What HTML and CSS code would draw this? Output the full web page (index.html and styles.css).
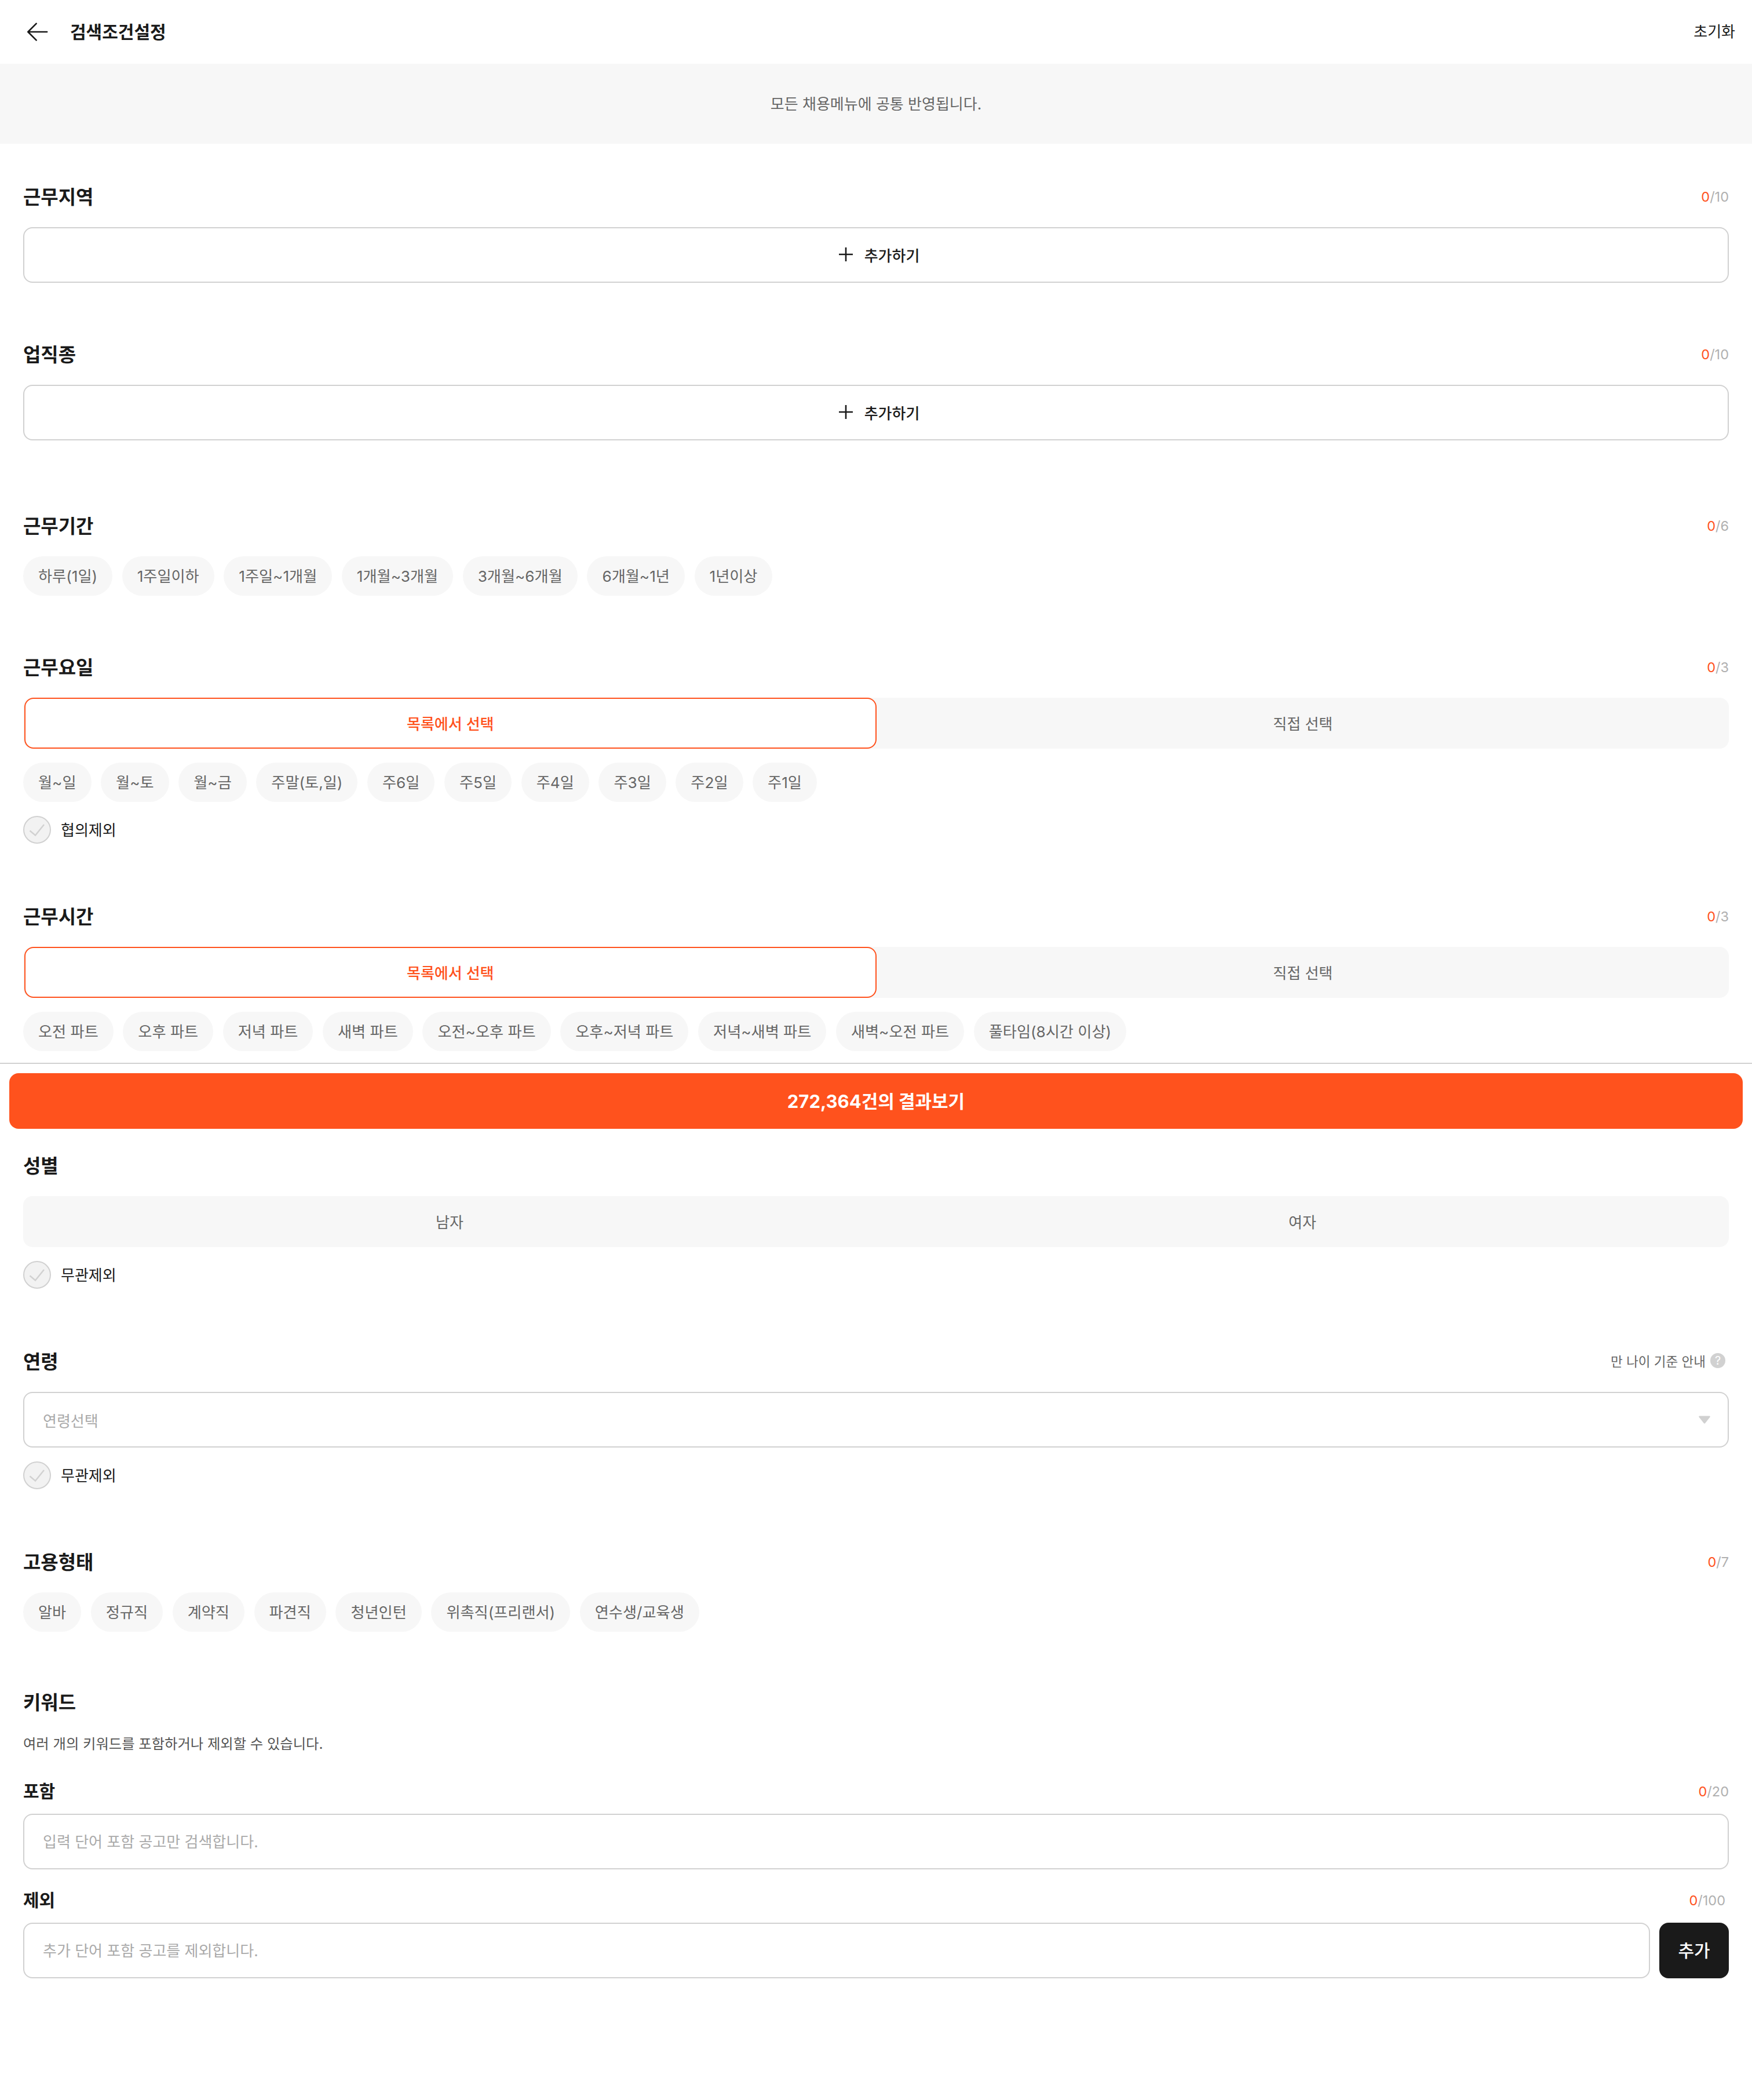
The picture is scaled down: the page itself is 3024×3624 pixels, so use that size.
FILE: index.html
```html
<!DOCTYPE html>
<html lang="ko">
<head>
  <meta charset="UTF-8" />
  <meta name="viewport" content="width=device-width, initial-scale=1" />
  <title>검색조건설정</title>
  <link rel="stylesheet" href="styles.css">
</head>
<body>

  <header class="topbar">
    <div class="topbar-left">
      <svg class="back-icon" viewBox="0 0 40 34" aria-hidden="true">
        <path d="M38 17H3M18 1.5L2.5 17L18 32.5" />
      </svg>
      <h1>검색조건설정</h1>
    </div>
    <button class="reset-btn">초기화</button>
  </header>

  <p class="notice">모든 채용메뉴에 공통 반영됩니다.</p>

  <main>
    <section class="section section-first">
      <div class="section-head">
        <h2>근무지역</h2>
        <span class="counter"><em>0</em>/10</span>
      </div>
      <button class="add-box">
        <svg class="plus-icon" viewBox="0 0 28 28" aria-hidden="true"><path d="M14 2V26M2 14H26" /></svg>
        추가하기
      </button>
    </section>

    <section class="section section-job">
      <div class="section-head">
        <h2>업직종</h2>
        <span class="counter"><em>0</em>/10</span>
      </div>
      <button class="add-box">
        <svg class="plus-icon" viewBox="0 0 28 28" aria-hidden="true"><path d="M14 2V26M2 14H26" /></svg>
        추가하기
      </button>
    </section>

    <section class="section section-wide">
      <div class="section-head">
        <h2>근무기간</h2>
        <span class="counter"><em>0</em>/6</span>
      </div>
      <div class="chips">
        <button class="chip">하루(1일)</button>
        <button class="chip">1주일이하</button>
        <button class="chip">1주일~1개월</button>
        <button class="chip">1개월~3개월</button>
        <button class="chip">3개월~6개월</button>
        <button class="chip">6개월~1년</button>
        <button class="chip">1년이상</button>
      </div>
    </section>

    <section class="section section-tight">
      <div class="section-head">
        <h2>근무요일</h2>
        <span class="counter"><em>0</em>/3</span>
      </div>
      <div class="segment">
        <button class="segment-item active">목록에서 선택</button>
        <button class="segment-item">직접 선택</button>
      </div>
      <div class="chips chips-below">
        <button class="chip">월~일</button>
        <button class="chip">월~토</button>
        <button class="chip">월~금</button>
        <button class="chip">주말(토,일)</button>
        <button class="chip">주6일</button>
        <button class="chip">주5일</button>
        <button class="chip">주4일</button>
        <button class="chip">주3일</button>
        <button class="chip">주2일</button>
        <button class="chip">주1일</button>
      </div>
      <label class="check">
        <span class="check-mark"><svg viewBox="2 2 44 44" aria-hidden="true"><path d="M11.5 25.5L21 33.5L36 15" /></svg></span>
        <span class="check-label">협의제외</span>
      </label>
    </section>

    <section class="section">
      <div class="section-head">
        <h2>근무시간</h2>
        <span class="counter"><em>0</em>/3</span>
      </div>
      <div class="segment">
        <button class="segment-item active">목록에서 선택</button>
        <button class="segment-item">직접 선택</button>
      </div>
      <div class="chips chips-below">
        <button class="chip">오전 파트</button>
        <button class="chip">오후 파트</button>
        <button class="chip">저녁 파트</button>
        <button class="chip">새벽 파트</button>
        <button class="chip">오전~오후 파트</button>
        <button class="chip">오후~저녁 파트</button>
        <button class="chip">저녁~새벽 파트</button>
        <button class="chip">새벽~오전 파트</button>
        <button class="chip">풀타임(8시간 이상)</button>
      </div>
    </section>

    <div class="result-bar">
      <button class="result-btn">272,364건의 결과보기</button>
    </div>

    <section class="section section-after-bar">
      <div class="section-head">
        <h2>성별</h2>
      </div>
      <div class="segment">
        <button class="segment-item">남자</button>
        <button class="segment-item">여자</button>
      </div>
      <label class="check">
        <span class="check-mark"><svg viewBox="2 2 44 44" aria-hidden="true"><path d="M11.5 25.5L21 33.5L36 15" /></svg></span>
        <span class="check-label">무관제외</span>
      </label>
    </section>

    <section class="section">
      <div class="section-head">
        <h2>연령</h2>
        <span class="age-help">만 나이 기준 안내 <i class="help-icon">?</i></span>
      </div>
      <div class="select-box">
        <span>연령선택</span>
        <svg class="select-arrow" viewBox="0 0 20 14" aria-hidden="true"><path d="M1.5 0.5H18.5C19.6 0.5 20.2 1.7 19.5 2.6L11.2 13C10.6 13.8 9.4 13.8 8.8 13L0.5 2.6C-0.2 1.7 0.4 0.5 1.5 0.5Z" /></svg>
      </div>
      <label class="check">
        <span class="check-mark"><svg viewBox="2 2 44 44" aria-hidden="true"><path d="M11.5 25.5L21 33.5L36 15" /></svg></span>
        <span class="check-label">무관제외</span>
      </label>
    </section>

    <section class="section">
      <div class="section-head">
        <h2>고용형태</h2>
        <span class="counter"><em>0</em>/7</span>
      </div>
      <div class="chips">
        <button class="chip">알바</button>
        <button class="chip">정규직</button>
        <button class="chip">계약직</button>
        <button class="chip">파견직</button>
        <button class="chip">청년인턴</button>
        <button class="chip">위촉직(프리랜서)</button>
        <button class="chip">연수생/교육생</button>
      </div>
    </section>

    <section class="section section-keyword">
      <div class="section-head section-head-tight">
        <h2>키워드</h2>
      </div>
      <p class="keyword-desc">여러 개의 키워드를 포함하거나 제외할 수 있습니다.</p>

      <div class="keyword-head">
        <h3>포함</h3>
        <span class="counter"><em>0</em>/20</span>
      </div>
      <input class="text-input" type="text" placeholder="입력 단어 포함 공고만 검색합니다." />

      <div class="keyword-head keyword-head-exclude">
        <h3>제외</h3>
        <span class="counter counter-inset"><em>0</em>/100</span>
      </div>
      <div class="input-row">
        <input class="text-input" type="text" placeholder="추가 단어 포함 공고를 제외합니다." />
        <button class="add-btn">추가</button>
      </div>
    </section>
  </main>

</body>
</html>
```

FILE: styles.css
```css
/* Base */
body {
  margin: 0;
  background: #fff;
  color: #1a1a1a;
  font-family: Inter, "Noto Sans CJK KR", sans-serif;
  font-size: 26px;
}
button, input {
  font-family: inherit;
  font-size: inherit;
}
button {
  cursor: pointer;
}
h1, h2, h3, p {
  margin: 0;
}

/* Top bar */
.topbar {
  height: 110px;
  display: flex;
  justify-content: space-between;
  align-items: center;
  padding: 0 29px 0 46px;
  box-sizing: border-box;
}
.topbar-left {
  display: flex;
  align-items: center;
  gap: 38px;
}
.back-icon {
  width: 37px;
  height: 32px;
  fill: none;
  stroke: #1a1a1a;
  stroke-width: 2.8;
  stroke-linecap: round;
  stroke-linejoin: round;
}
.topbar h1 {
  font-size: 30px;
  font-weight: 700;
  padding-bottom: 4px;
}
.reset-btn {
  border: none;
  background: none;
  padding: 0;
  color: #1a1a1a;
  margin-bottom: 6px;
}

.notice {
  height: 138px;
  line-height: 140px;
  background: #f7f7f7;
  color: #666;
  text-align: center;
}

/* Sections */
.section {
  margin: 102px 40px 0;
}
.section-first {
  margin-top: 68px;
}
.section-job {
  margin-top: 100px;
}
.section-wide {
  margin-top: 124px;
}
.section-tight {
  margin-top: 100px;
}
.section-keyword {
  margin-top: 98px;
}
.section-after-bar {
  margin-top: 40px;
}
.section-head {
  height: 48px;
  box-sizing: border-box;
  padding-bottom: 5px;
  margin-bottom: 28px;
  display: flex;
  justify-content: space-between;
  align-items: center;
}
.section-head h2 {
  font-size: 33px;
  font-weight: 700;
}
.counter {
  font-size: 23.5px;
  color: #b0b0b0;
  margin-top: 4px;
}
.counter em {
  font-style: normal;
  color: #ff521d;
}
.counter-inset {
  margin-right: 6px;
}

/* Add box */
.add-box {
  width: 100%;
  height: 96px;
  padding: 0 0 2px 9px;
  background: #fff;
  border: 2px solid #d1d1d1;
  border-radius: 16px;
  color: #1a1a1a;
  font-weight: 500;
  display: flex;
  justify-content: center;
  align-items: center;
  gap: 18px;
}
.plus-icon {
  width: 28px;
  height: 28px;
  fill: none;
  stroke: #1a1a1a;
  stroke-width: 2.6;
}

/* Chips */
.chips {
  display: flex;
  gap: 16.6px;
}
.chips-below {
  margin-top: 24px;
}
.chip {
  height: 68px;
  padding: 0 26px 2px;
  border: none;
  border-radius: 34px;
  background: #f7f7f7;
  color: #666;
  font-size: 26.2px;
  white-space: nowrap;
}

/* Segment tabs */
.segment {
  display: flex;
  height: 88px;
  background: #f7f7f7;
  border-radius: 16px;
}
.segment-item {
  flex: 1;
  padding: 0 0 2px;
  border: 2px solid transparent;
  border-radius: 16px;
  background: none;
  color: #666;
}
.segment-item.active {
  margin: 0 1px 0 2px;
  border-color: #ff521d;
  background: #fff;
  color: #ff521d;
  font-weight: 500;
}

/* Checkbox row */
.check {
  display: flex;
  align-items: center;
  gap: 17px;
  margin-top: 24px;
  height: 48px;
}
.check-mark {
  width: 48px;
  height: 48px;
  box-sizing: border-box;
  border: 2px solid #d1d1d1;
  border-radius: 50%;
  background: #f2f2f2;
}
.check-mark svg {
  display: block;
  width: 44px;
  height: 44px;
  fill: none;
  stroke: #d1d1d1;
  stroke-width: 2.4;
}
.check-label {
  padding-bottom: 3px;
}

/* Bottom result bar */
.result-bar {
  margin-top: 20px;
  border-top: 2px solid #d1d1d1;
  padding: 16px 16px 0;
}
.result-btn {
  width: 100%;
  height: 96px;
  padding: 0 0 4px;
  border: none;
  border-radius: 16px;
  background: #ff521d;
  color: #fff;
  font-size: 31px;
  font-weight: 700;
}

/* Age */
.age-help {
  display: flex;
  align-items: center;
  gap: 8px;
  margin-right: 6px;
  font-size: 22.5px;
  color: #666;
}
.help-icon {
  width: 26px;
  height: 26px;
  border-radius: 50%;
  background: #d1d1d1;
  color: #fff;
  font-style: normal;
  font-size: 20px;
  line-height: 26px;
  text-align: center;
}
.select-box {
  height: 96px;
  box-sizing: border-box;
  border: 2px solid #d1d1d1;
  border-radius: 16px;
  padding: 0 30px 0 32px;
  display: flex;
  justify-content: space-between;
  align-items: center;
  color: #aaa;
}
.select-arrow {
  width: 20px;
  height: 14px;
  fill: #d1d1d1;
}

/* Keyword */
.section-head-tight {
  margin-bottom: 0;
}
.keyword-desc {
  margin-top: 29px;
  font-size: 24.3px;
  line-height: 36px;
  color: #555;
}
.keyword-head {
  height: 40px;
  margin-top: 42px;
  margin-bottom: 21px;
  display: flex;
  justify-content: space-between;
  align-items: center;
}
.keyword-head-exclude {
  margin-top: 31px;
}
.keyword-head h3 {
  font-size: 30px;
  font-weight: 700;
}
.text-input {
  width: 100%;
  height: 96px;
  box-sizing: border-box;
  border: 2px solid #d1d1d1;
  border-radius: 16px;
  padding: 0 32px;
  color: #1a1a1a;
  outline: none;
}
.text-input::placeholder {
  color: #aaa;
}
.input-row {
  display: flex;
  gap: 16px;
}
.add-btn {
  flex: none;
  width: 120px;
  height: 96px;
  padding: 0 0 4px;
  border: none;
  border-radius: 16px;
  background: #1a1a1a;
  color: #fff;
  font-size: 30px;
  font-weight: 500;
}
```
